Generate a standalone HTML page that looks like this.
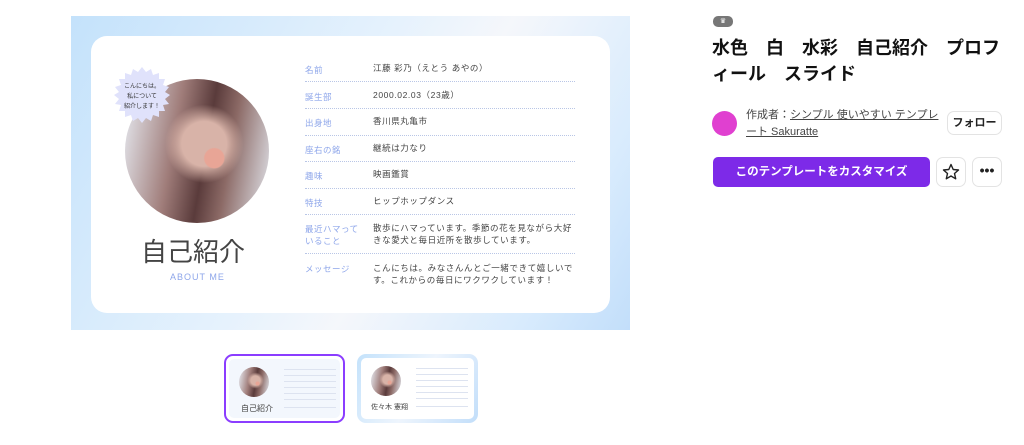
<!DOCTYPE html>
<html><head><meta charset="utf-8"><style>
*{margin:0;padding:0;box-sizing:border-box}
body{width:1024px;height:445px;background:#fff;font-family:"Liberation Sans","Noto Sans CJK JP",sans-serif;position:relative;overflow:hidden}
.abs{position:absolute}
.slide{left:71px;top:16px;width:559px;height:314px;background:linear-gradient(120deg,#c4e2fb 0%,#e6f2fd 45%,#f5f7fb 60%,#d8ebfd 85%,#c2defa 100%)}
.card{left:20px;top:20px;width:519px;height:277px;background:#fff;border-radius:16px}
.photo{border-radius:50%;background:radial-gradient(circle at 62% 55%,#e8a596 0 8%,transparent 9%),radial-gradient(circle at 55% 45%,#d8b3a8 0 20%,transparent 35%),linear-gradient(100deg,#e9eef5 0%,#a07d7a 35%,#5a3b3b 55%,#8c6a66 70%,#e4e8ef 100%)}
.lbl{position:absolute;left:305px;color:#8ea6ea;font-size:8.5px;letter-spacing:.5px}
.val{position:absolute;left:373px;color:#444;font-size:8.5px;letter-spacing:.6px;line-height:12px}
.ln{position:absolute;left:305px;width:270px;border-top:1px dotted #b9c6e6}
.btn{position:absolute;border:1px solid #e3e3e3;border-radius:7px;background:#fff}
.tl{position:absolute;left:0;width:100%;border-top:1px solid #dde3f0}
</style></head><body>
<div class="abs slide">
 <div class="abs card"></div>
</div>
<div class="abs photo" style="left:125px;top:79px;width:144px;height:144px"></div>
<svg class="abs" style="left:113px;top:66px" width="58" height="58" viewBox="0 0 58 58">
<polygon fill="#e0e2fb" points="29,1 33,6 38,3 40,9 46,7 46,13 52,13 50,19 56,21 52,26 57,29 52,33 56,38 50,39 52,45 46,45 46,51 40,49 38,55 33,52 29,57 25,52 20,55 18,49 12,51 12,45 6,45 8,39 2,38 6,33 1,29 6,26 2,21 8,19 6,13 12,13 12,7 18,9 20,3 25,6"/>
</svg>
<div class="abs" style="left:118px;top:82px;width:48px;text-align:center;font-size:6px;line-height:10px;color:#333">こんにちは。<br>私について<br>紹介します！</div>
<div class="abs" style="left:141px;top:232px;font-size:26px;color:#444">自己紹介</div>
<div class="abs" style="left:170px;top:272px;font-size:9px;color:#8ea6ea;letter-spacing:1px">ABOUT ME</div>

<div class="lbl" style="top:64px">名前</div><div class="val" style="top:62px">江藤 彩乃（えとう あやの）</div><div class="ln" style="top:81px"></div>
<div class="lbl" style="top:91px">誕生部</div><div class="val" style="top:89px">2000.02.03（23歳）</div><div class="ln" style="top:108px"></div>
<div class="lbl" style="top:117px">出身地</div><div class="val" style="top:115px">香川県丸亀市</div><div class="ln" style="top:135px"></div>
<div class="lbl" style="top:144px">座右の銘</div><div class="val" style="top:142px">継続は力なり</div><div class="ln" style="top:161px"></div>
<div class="lbl" style="top:170px">趣味</div><div class="val" style="top:168px">映画鑑賞</div><div class="ln" style="top:188px"></div>
<div class="lbl" style="top:197px">特技</div><div class="val" style="top:195px">ヒップホップダンス</div><div class="ln" style="top:214px"></div>
<div class="lbl" style="top:223px;line-height:12px">最近ハマって<br>いること</div><div class="val" style="top:222px;width:205px">散歩にハマっています。季節の花を見ながら大好きな愛犬と毎日近所を散歩しています。</div><div class="ln" style="top:253px"></div>
<div class="lbl" style="top:263px">メッセージ</div><div class="val" style="top:262px;width:205px">こんにちは。みなさんんとご一緒できて嬉しいです。これからの毎日にワクワクしています！</div>

<div class="abs" style="left:224px;top:354px;width:121px;height:69px;border:2px solid #8b3dff;border-radius:9px;padding:3px"><div style="width:100%;height:100%;background:#f3f7fd;border-radius:5px;position:relative">
<div class="photo abs" style="left:10px;top:8px;width:30px;height:30px"></div><div class="abs" style="left:12px;top:44px;font-size:8px;color:#444">自己紹介</div>
<div class="abs" style="left:55px;top:4px;width:52px;height:50px"><div class="tl" style="top:6px"></div><div class="tl" style="top:12px"></div><div class="tl" style="top:18px"></div><div class="tl" style="top:24px"></div><div class="tl" style="top:30px"></div><div class="tl" style="top:36px"></div><div class="tl" style="top:44px"></div></div></div></div>
<div class="abs" style="left:357px;top:354px;width:121px;height:69px;border-radius:9px;background:linear-gradient(120deg,#c4e2fb,#eef5fd,#c2defa);padding:4px"><div style="width:100%;height:100%;background:#fff;border-radius:5px;position:relative">
<div class="photo abs" style="left:10px;top:8px;width:30px;height:30px"></div><div class="abs" style="left:10px;top:44px;font-size:7px;color:#444">佐々木 憲翔</div>
<div class="abs" style="left:55px;top:4px;width:52px;height:50px"><div class="tl" style="top:6px"></div><div class="tl" style="top:12px"></div><div class="tl" style="top:18px"></div><div class="tl" style="top:24px"></div><div class="tl" style="top:30px"></div><div class="tl" style="top:36px"></div><div class="tl" style="top:44px"></div></div></div></div>

<div class="abs" style="left:713px;top:16px;width:20px;height:11px;background:#777;border-radius:5px;color:#fff;font-size:7px;text-align:center;line-height:11px">♛</div>
<div class="abs" style="left:712px;top:35px;width:320px;font-size:18px;font-weight:bold;line-height:26px;color:#111;white-space:nowrap">水色　白　水彩　自己紹介　プロフ<br>ィール　スライド</div>
<div class="abs" style="left:712px;top:111px;width:25px;height:25px;border-radius:50%;background:#e040d0"></div>
<div class="abs" style="left:746px;top:107px;width:195px;font-size:11px;line-height:17px;color:#444;white-space:nowrap">作成者：<span style="text-decoration:underline">シンプル 使いやすい テンプレ<br>ート Sakuratte</span></div>
<div class="btn" style="left:947px;top:111px;width:55px;height:24px;font-size:11px;font-weight:bold;text-align:center;line-height:22px;color:#222">フォロー</div>
<div class="abs" style="left:713px;top:157px;width:217px;height:30px;background:#7d2ae8;border-radius:5px;color:#fff;font-size:11.5px;font-weight:bold;text-align:center;line-height:30px">このテンプレートをカスタマイズ</div>
<div class="btn" style="left:936px;top:157px;width:30px;height:30px"><svg width="28" height="28" viewBox="0 0 28 28"><polygon points="14,6.5 16.2,11.5 21.5,12 17.5,15.5 18.7,20.8 14,18 9.3,20.8 10.5,15.5 6.5,12 11.8,11.5" fill="none" stroke="#222" stroke-width="1.4" stroke-linejoin="round"/></svg></div>
<div class="btn" style="left:972px;top:157px;width:30px;height:30px;text-align:center;font-size:14px;font-weight:bold;line-height:24px;color:#222">•••</div>
</body></html>
